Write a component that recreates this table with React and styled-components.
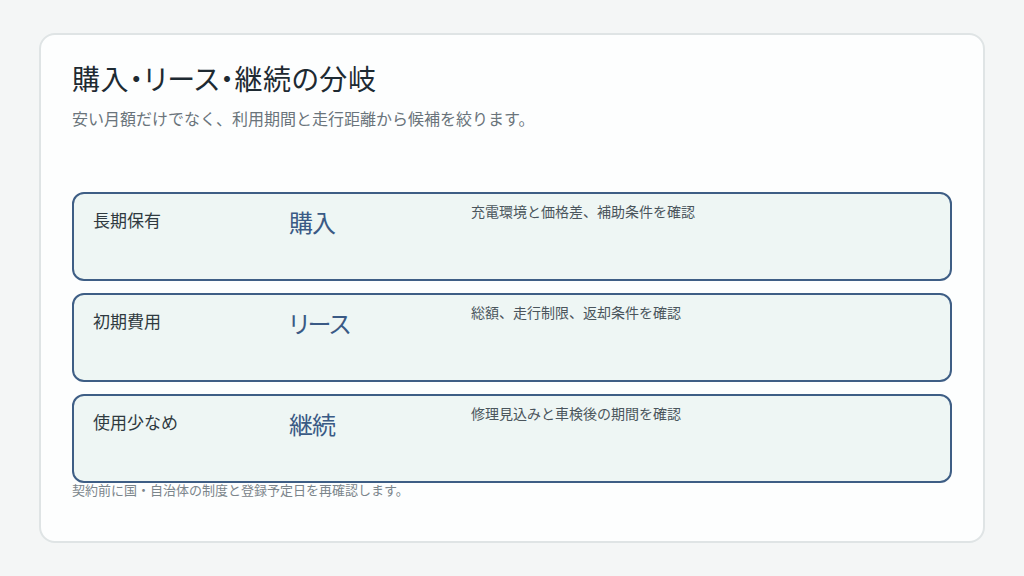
import React from 'react'
import styled, { createGlobalStyle } from 'styled-components'

const GlobalStyle = createGlobalStyle`
    html, body {
        margin: 0;
        padding: 0;
        background: #f4f6f6;
    }
    body {
        font-family: "Noto Sans CJK JP", "Noto Sans", sans-serif;
    }
`;

const Page = styled.div`
    width: 1024px;
    height: 576px;
    box-sizing: border-box;
    padding: 33px 39px;
    background: #f4f6f6;
`;

const Card = styled.section`
    height: 100%;
    box-sizing: border-box;
    background: #fdfefe;
    border: 2px solid #dfe4e5;
    border-radius: 16px;
    padding: 25px 31px 0 31px;
    display: flex;
    flex-direction: column;
`;

const Title = styled.h1`
    margin: 0;
    font-size: 28px;
    font-weight: 400;
    line-height: 1.3;
    color: #1e2a32;
    font-feature-settings: "palt";
    letter-spacing: 0.6px;
`;

const Subtitle = styled.p`
    margin: 10px 0 0 0;
    font-size: 16px;
    line-height: 24px;
    color: #6a747b;
`;

const Options = styled.div`
    margin-top: 62px;
    display: flex;
    flex-direction: column;
    gap: 12px;
`;

const Option = styled.div`
    height: 89px;
    box-sizing: border-box;
    border: 2px solid #3e5e85;
    border-radius: 12px;
    background: #eef6f4;
    padding: 7px 19px 0 19px;
    display: grid;
    grid-template-columns: 196px 182px 1fr;
    align-items: start;
`;

const Label = styled.div`
    margin-top: 7px;
    font-size: 17px;
    line-height: 24px;
    color: #2f3a40;
`;

const Choice = styled.div`
    margin-top: 5px;
    font-size: 24px;
    line-height: 32px;
    color: #3a5a85;
    font-feature-settings: "palt";
    letter-spacing: -1px;
`;

const Note = styled.div`
    font-size: 14px;
    line-height: 21px;
    color: #4a555c;
`;

const Footer = styled.p`
    margin: -2px 0 0 0;
    font-size: 13px;
    line-height: 18px;
    color: #7b858b;
`;

const options = [
    { label: '長期保有', choice: '購入', note: '充電環境と価格差、補助条件を確認' },
    { label: '初期費用', choice: 'リース', note: '総額、走行制限、返却条件を確認' },
    { label: '使用少なめ', choice: '継続', note: '修理見込みと車検後の期間を確認' },
];

export default function App() {
    return (
        <>
            <GlobalStyle />
            <Page>
                <Card>
                    <Title>購入・リース・継続の分岐</Title>
                    <Subtitle>安い月額だけでなく、利用期間と走行距離から候補を絞ります。</Subtitle>
                    <Options>
                        {options.map((o) => (
                            <Option key={o.choice}>
                                <Label>{o.label}</Label>
                                <Choice>{o.choice}</Choice>
                                <Note>{o.note}</Note>
                            </Option>
                        ))}
                    </Options>
                    <Footer>契約前に国・自治体の制度と登録予定日を再確認します。</Footer>
                </Card>
            </Page>
        </>
    )
}
